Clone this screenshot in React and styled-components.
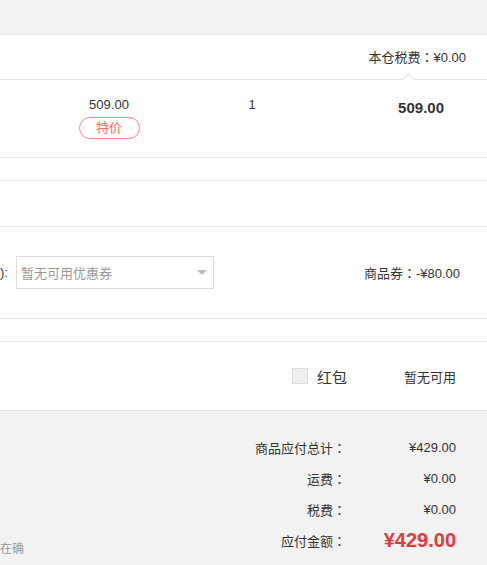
import React from "react";
import styled, { createGlobalStyle } from "styled-components";

const GlobalStyle = createGlobalStyle`
  html, body {
    margin: 0;
    padding: 0;
    background: #fff;
  }
  body {
    font-family: "Liberation Sans", "Noto Sans CJK SC", sans-serif;
    font-size: 13px;
    color: #333;
  }
`;

const Page = styled.div`
  width: 487px;
  height: 565px;
  overflow: hidden;
  display: flex;
  flex-direction: column;
`;

const TopBand = styled.div`
  height: 34px;
  background: #f2f2f2;
  border-bottom: 1px solid #e6e6e6;
`;

const Colon = styled.span`
  font-family: "Noto Sans CJK JP", sans-serif;
`;

const TaxBar = styled.div`
  position: relative;
  height: 44px;
  line-height: 44px;
  text-align: right;
  padding-right: 21px;
  border-bottom: 1px solid #e6e6e6;
  &::after {
    content: "";
    position: absolute;
    left: 404px;
    bottom: -5px;
    width: 8px;
    height: 8px;
    background: #fff;
    border-top: 1px solid #e0e0e0;
    border-left: 1px solid #e0e0e0;
    transform: rotate(45deg);
  }
`;

const ItemRow = styled.div`
  display: flex;
  height: 78px;
  border-bottom: 1px solid #e6e6e6;
  padding-top: 16px;
  box-sizing: border-box;
`;

const PriceCell = styled.div`
  width: 140px;
  margin-left: 39px;
  display: flex;
  flex-direction: column;
  align-items: center;
  line-height: 18px;
`;

const Tag = styled.span`
  margin-top: 3px;
  width: 61px;
  height: 22px;
  box-sizing: border-box;
  border: 1px solid #f88;
  border-radius: 11px;
  color: #f66;
  font-size: 13px;
  line-height: 20px;
  text-align: center;
`;

const QtyCell = styled.div`
  width: 146px;
  text-align: center;
  line-height: 18px;
`;

const SubtotalCell = styled.div`
  flex: 1;
  text-align: right;
  padding-right: 43px;
  font-size: 15px;
  font-weight: bold;
  line-height: 24px;
`;

const Blank = styled.div`
  height: ${(p) => p.h}px;
  border-bottom: 1px solid #e6e6e6;
`;

const CouponRow = styled.div`
  height: 91px;
  display: flex;
  align-items: center;
  border-bottom: 1px solid #e6e6e6;
  padding-right: 27px;
`;

const CouponLabel = styled.span`
  margin-right: 8px;
  white-space: nowrap;
`;

const Select = styled.div`
  width: 198px;
  height: 33px;
  box-sizing: border-box;
  border: 1px solid #ddd;
  display: flex;
  align-items: center;
  justify-content: space-between;
  padding: 0 6px 0 4px;
  color: #999;
  font-size: 13px;
`;

const Caret = styled.span`
  width: 0;
  height: 0;
  border-left: 5px solid transparent;
  border-right: 5px solid transparent;
  border-top: 5px solid #bbb;
`;

const CouponValue = styled.span`
  margin-left: auto;
`;

const PacketRow = styled.div`
  height: 68px;
  display: flex;
  align-items: center;
  justify-content: flex-end;
  padding-right: 31px;
  border-bottom: 1px solid #e6e6e6;
`;

const Check = styled.span`
  width: 16px;
  height: 16px;
  box-sizing: border-box;
  background: #eee;
  border: 1px solid #ddd;
  margin-right: 9px;
`;

const PacketName = styled.span`
  font-size: 15px;
  margin-right: 57px;
`;

const Summary = styled.div`
  flex: 1;
  background: #f2f2f2;
  display: flex;
  justify-content: space-between;
  padding: 21px 31px 7px 0;
`;

const Note = styled.span`
  align-self: flex-end;
  color: #999;
  font-size: 12px;
  line-height: 18px;
  white-space: nowrap;
`;

const Table = styled.div`
  display: grid;
  grid-template-columns: auto 100px;
  column-gap: 10px;
  grid-auto-rows: 31px;
  align-items: center;
  align-self: flex-start;
`;

const Label = styled.span`
  text-align: right;
`;

const Value = styled.span`
  text-align: right;
  ${(p) =>
    p.$big &&
    `
    color: #e4393c;
    font-size: 20px;
    font-weight: bold;
  `}
`;

const totals = [
  ["商品应付总计", "¥429.00"],
  ["运费", "¥0.00"],
  ["税费", "¥0.00"],
];

export default function App() {
  return (
    <>
      <GlobalStyle />
      <Page>
        <TopBand />
        <TaxBar>
          本仓税费<Colon>：</Colon>¥0.00
        </TaxBar>
        <ItemRow>
          <PriceCell>
            509.00
            <Tag>特价</Tag>
          </PriceCell>
          <QtyCell>1</QtyCell>
          <SubtotalCell>509.00</SubtotalCell>
        </ItemRow>
        <Blank h={22} />
        <Blank h={45} />
        <CouponRow>
          <CouponLabel>):</CouponLabel>
          <Select>
            暂无可用优惠券
            <Caret />
          </Select>
          <CouponValue>
            商品券<Colon>：</Colon>-¥80.00
          </CouponValue>
        </CouponRow>
        <Blank h={22} />
        <PacketRow>
          <Check />
          <PacketName>红包</PacketName>
          暂无可用
        </PacketRow>
        <Summary>
          <Note>在确</Note>
          <Table>
            {totals.map(([l, v]) => (
              <React.Fragment key={l}>
                <Label>
                  {l}
                  <Colon>：</Colon>
                </Label>
                <Value>{v}</Value>
              </React.Fragment>
            ))}
            <Label>
              应付金额<Colon>：</Colon>
            </Label>
            <Value $big>¥429.00</Value>
          </Table>
        </Summary>
      </Page>
    </>
  );
}
